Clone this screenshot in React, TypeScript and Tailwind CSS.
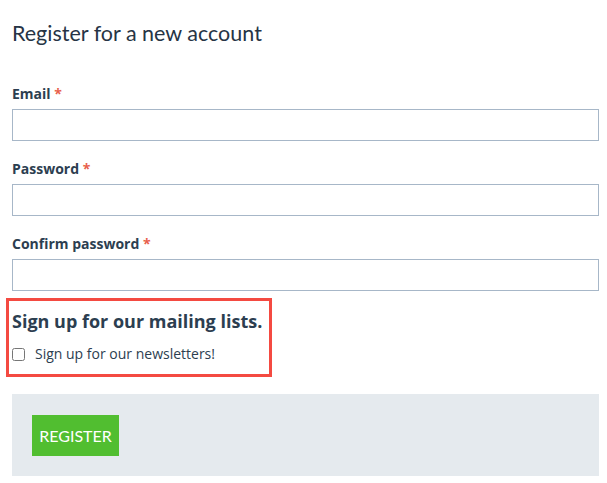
import React from 'react';

const Field = ({ label }: { label: string }) => (
  <div className="flex flex-col">
    <label className="mb-[5px] text-[14px] leading-5 font-bold text-[#2c3e50]">
      {label} <span className="text-[#e8604c]">*</span>
    </label>
    <input className="h-8 w-full border border-[#a7b7c8] bg-white px-2 outline-none" />
  </div>
);

export default function App() {
  return (
    <div className="w-[607px] bg-white pt-[19px] pr-2 pl-3 font-['Open_Sans',sans-serif] text-[#2c3e50]">
      <h1 className="font-['Lato',sans-serif] text-[21.5px] leading-7 text-[#263445]">Register for a new account</h1>

      <div className="mt-[37px] flex flex-col gap-[18px]">
        <Field label="Email" />
        <Field label="Password" />
        <Field label="Confirm password" />
      </div>

      <section className="relative mt-[18px]">
        <div className="pointer-events-none absolute top-[-11px] left-[-6px] h-[79px] w-[266px] border-3 border-[#f44a41]" />
        <h2 className="text-[18px] leading-6 font-bold">Sign up for our mailing lists.</h2>
        <label className="mt-[11px] flex items-center gap-[10px] text-[14px] leading-5">
          <input type="checkbox" className="m-0 h-[13px] w-[13px]" />
          <span>Sign up for our newsletters!</span>
        </label>
      </section>

      <div className="mt-[30px] bg-[#e5eaee] px-5 pt-[21px] pb-5">
        <button className="h-[41px] w-[87px] bg-[#51be30] font-['Lato',sans-serif] text-[16px] text-white">
          REGISTER
        </button>
      </div>
    </div>
  );
}
